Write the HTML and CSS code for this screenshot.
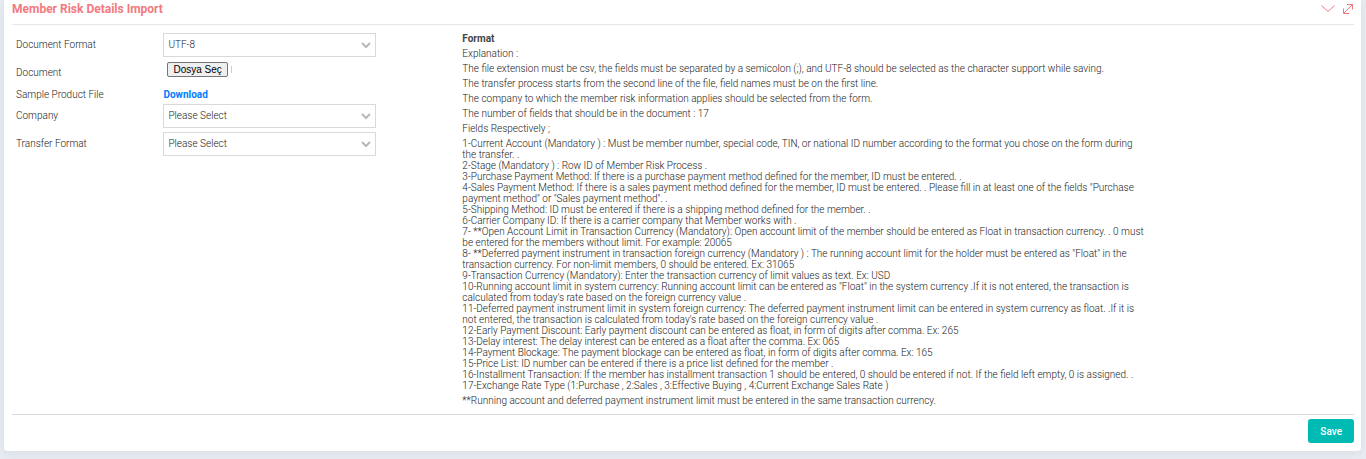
FILE: index.html
```html
<!DOCTYPE html>
<html lang="en">
<head>
    <meta charset="UTF-8">
    <meta name="viewport" content="width=device-width, initial-scale=1.0">
    <title>Member Risk Details Import</title>
    <link rel="stylesheet" href="styles.css">
</head>
<body>
    <form class="portlet">
        <header class="portlet-title">
            <h1>Member Risk Details Import</h1>
            <div class="tools">
                <button type="button" class="tool" aria-label="Collapse">
                    <svg width="14" height="10" viewBox="0 0 14 10"><path d="M.5 1.500l6.500 6 6.500-6"/></svg>
                </button>
                <button type="button" class="tool" aria-label="Full screen">
                    <svg width="10" height="10" viewBox="0 0 10 10"><path d="M4 .5h5.500v5M9.500.5l-9 9M.5 4.500v5H6"/></svg>
                </button>
            </div>
        </header>

        <div class="row">
            <div class="fields">
                <div class="form-group">
                    <label for="file_format">Document Format</label>
                    <select id="file_format">
                        <option>UTF-8</option>
                    </select>
                </div>
                <div class="form-group">
                    <label for="uploaded_file">Document</label>
                    <div class="file">
                        <input type="file" id="uploaded_file" class="file-input" tabindex="-1">
                        <button type="button" class="file-button" onclick="document.getElementById('uploaded_file').click()">Dosya Seç</button>
                        <span class="file-mark"></span>
                    </div>
                </div>
                <div class="form-group form-group-text">
                    <span>Sample Product File</span>
                    <a href="#" class="download">Download</a>
                </div>
                <div class="form-group">
                    <label for="company">Company</label>
                    <select id="company">
                        <option>Please Select</option>
                    </select>
                </div>
                <div class="form-group">
                    <label for="transfer_format">Transfer Format</label>
                    <select id="transfer_format">
                        <option>Please Select</option>
                    </select>
                </div>
            </div>

            <div class="format">
                <h2>Format</h2>
                <p>Explanation :</p>
                <p>The file extension must be csv, the fields must be separated by a semicolon (;), and UTF-8 should be selected as the character support while saving.</p>
                <p>The transfer process starts from the second line of the file, field names must be on the first line.</p>
                <p>The company to which the member risk information applies should be selected from the form.</p>
                <p>The number of fields that should be in the document : 17</p>
                <p>Fields Respectively ;</p>
                <p>
                    1-Current Account (Mandatory ) : Must be member number, special code, TIN, or national ID number according to the format you chose on the form during the transfer. .<br>
                    2-Stage (Mandatory ) : Row ID of Member Risk Process .<br>
                    3-Purchase Payment Method: If there is a purchase payment method defined for the member, ID must be entered. .<br>
                    4-Sales Payment Method: If there is a sales payment method defined for the member, ID must be entered. . Please fill in at least one of the fields "Purchase payment method" or "Sales payment method". .<br>
                    5-Shipping Method: ID must be entered if there is a shipping method defined for the member. .<br>
                    6-Carrier Company ID: If there is a carrier company that Member works with .<br>
                    7- **Open Account Limit in Transaction Currency (Mandatory): Open account limit of the member should be entered as Float in transaction currency. . 0 must be entered for the members without limit. For example: 20065<br>
                    8- **Deferred payment instrument in transaction foreign currency (Mandatory ) : The running account limit for the holder must be entered as "Float" in the transaction currency. For non-limit members, 0 should be entered. Ex: 31065<br>
                    9-Transaction Currency (Mandatory): Enter the transaction currency of limit values as text. Ex: USD<br>
                    10-Running account limit in system currency: Running account limit can be entered as "Float" in the system currency .If it is not entered, the transaction is calculated from today's rate based on the foreign currency value .<br>
                    11-Deferred payment instrument limit in system foreign currency: The deferred payment instrument limit can be entered in system currency as float. .If it is not entered, the transaction is calculated from today's rate based on the foreign currency value .<br>
                    12-Early Payment Discount: Early payment discount can be entered as float, in form of digits after comma. Ex: 265<br>
                    13-Delay interest: The delay interest can be entered as a float after the comma. Ex: 065<br>
                    14-Payment Blockage: The payment blockage can be entered as float, in form of digits after comma. Ex: 165<br>
                    15-Price List: ID number can be entered if there is a price list defined for the member .<br>
                    16-Installment Transaction: If the member has installment transaction 1 should be entered, 0 should be entered if not. If the field left empty, 0 is assigned. .<br>
                    17-Exchange Rate Type (1:Purchase , 2:Sales , 3:Effective Buying , 4:Current Exchange Sales Rate )
                </p>
                <p>**Running account and deferred payment instrument limit must be entered in the same transaction currency.</p>
            </div>
        </div>

        <footer class="portlet-footer">
            <button type="submit" class="save">Save</button>
        </footer>
    </form>
</body>
</html>
```

FILE: styles.css
```css
* {
    box-sizing: border-box;
}
body {
    margin: 0;
    padding: 0 5px 8px 4px;
    background: #e9ecf3;
    font-family: Roboto, sans-serif;
    font-size: 10px;
    font-weight: 300;
    line-height: 11px;
    color: #222;
}
.portlet {
    padding: 0 7px 8px 8px;
    background: #fff;
    border-radius: 0 0 4px 4px;
    box-shadow: 0 2px 12px rgba(60, 80, 90, 0.1);
}
.portlet-title {
    display: flex;
    justify-content: space-between;
    height: 25px;
    border-bottom: 1px solid #e7e7e7;
}
.portlet-title h1 {
    margin: 0;
    font-size: 12px;
    line-height: 18px;
    font-weight: 700;
    color: #f3797e;
}
.tools {
    display: flex;
    align-items: center;
    gap: 8px;
    height: 17px;
    padding-right: 1px;
}
.tool {
    display: flex;
    padding: 0;
    border: 0;
    background: none;
    cursor: pointer;
}
.tool svg {
    fill: none;
    stroke: #f3797e;
}
.row {
    display: grid;
    grid-template-columns: 1fr 2fr;
    padding-top: 8px;
}
.fields {
    display: flex;
    flex-direction: column;
    gap: 4px;
    padding: 0 4px;
}
.form-group {
    display: grid;
    grid-template-columns: 4fr 6fr 2fr;
    align-items: center;
    min-height: 24px;
}
.form-group label {
    padding-bottom: 2px;
}
.form-group > :nth-child(2) {
    margin: 0 6px 0 1px;
}
.form-group-text {
    min-height: 11px;
}
.form-group select {
    height: 24px;
    padding: 0 20px 2px 4px;
    border: 1px solid #d9d9d9;
    border-radius: 0;
    appearance: none;
    background: #fff url("data:image/svg+xml,%3Csvg xmlns='http://www.w3.org/2000/svg' width='10' height='7'%3E%3Cpath d='M1 1l4 4 4-4' fill='none' stroke='%23b8b8b8' stroke-width='2'/%3E%3C/svg%3E") no-repeat right 4px center;
    font: inherit;
    color: #222;
}
.file {
    display: flex;
    align-items: center;
    gap: 3px;
    padding: 0 0 7px 4px;
}
.file-input {
    position: absolute;
    width: 1px;
    height: 1px;
    opacity: 0;
}
.file-button {
    height: 15px;
    padding: 0 5px;
    border: 1px solid #767676;
    border-radius: 2px;
    background: #efefef;
    font-family: "Liberation Sans", Arial, sans-serif;
    font-size: 10px;
    line-height: 13px;
    color: #000;
}
.file-mark {
    width: 1px;
    height: 7px;
    background: #ffc37a;
}
.download {
    color: #007bff;
    font-weight: 700;
    text-decoration: none;
}
.format {
    max-width: 692px;
    padding: 0 3px;
}
.format h2 {
    margin: 0 0 4px;
    font-size: 10px;
    line-height: 11px;
    font-weight: 700;
    color: #444;
}
.format p {
    margin: 0 0 4px;
}
.portlet-footer {
    display: flex;
    justify-content: flex-end;
    margin-top: 4px;
    padding-top: 4px;
    border-top: 1px solid #d9d9d9;
}
.save {
    height: 24px;
    padding: 0 12px;
    border: 0;
    border-radius: 3px;
    background: #00bbb3;
    font-family: inherit;
    font-size: 10px;
    font-weight: 500;
    color: #fff;
    cursor: pointer;
}
```
